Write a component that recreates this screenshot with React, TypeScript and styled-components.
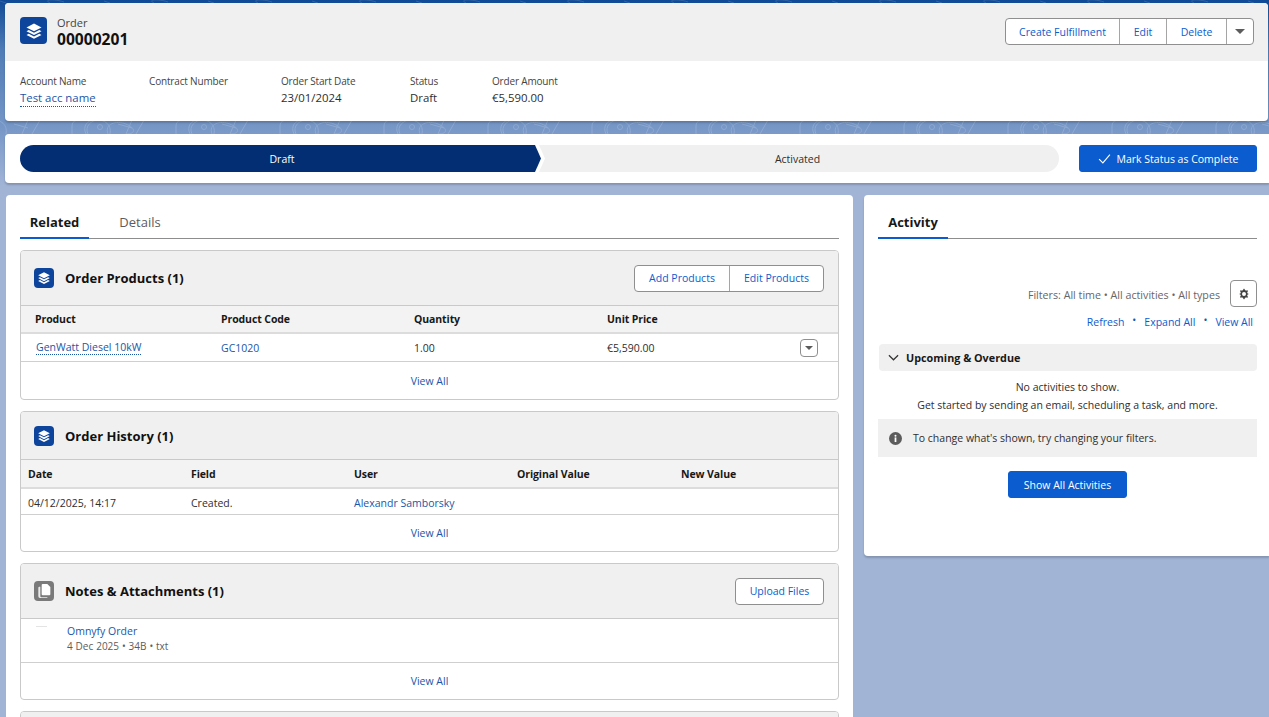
import React from "react";
import styled, { createGlobalStyle } from "styled-components";

const Global = createGlobalStyle`
  html, body { margin: 0; padding: 0; height: 717px; overflow: hidden; }
  body { font-family: "Open Sans", "Noto Sans", "Liberation Sans", sans-serif; font-size: 11.5px; color: #181818; }
  * { box-sizing: border-box; }
`;

const Page = styled.div`
  position: relative;
  width: 1269px;
  height: 717px;
  overflow: hidden;
  padding-top: 3px;
  background: linear-gradient(180deg, #0f4a96 0px, #4f7cb6 50px, #7596c6 125px, #a1b4d6 186px, #a1b4d6 100%);
`;

const Pattern = styled.svg`
  position: absolute;
  left: 0;
  top: 0;
  width: 1269px;
  height: 140px;
  opacity: 0.22;
`;

const Highlights = styled.section`
  position: relative;
  margin: 0 1px 0 5px;
  height: 118px;
  background: #fff;
  border-radius: 4px;
  overflow: hidden;
  box-shadow: 0 2px 2px rgba(0, 0, 0, 0.18);
`;

const HighlightHead = styled.header`
  height: 58px;
  background: #f0f0f0;
  display: flex;
  align-items: flex-start;
  justify-content: space-between;
  padding: 14px 14px 0 15px;
`;

const TitleWrap = styled.div`
  display: flex;
  gap: 10px;
`;

const IconTile = styled.span<{ $size: number; $tone?: string }>`
  width: ${(p) => p.$size}px;
  height: ${(p) => p.$size}px;
  background: ${(p) => p.$tone ?? "#0d459c"};
  border-radius: 4px;
  display: flex;
  align-items: center;
  justify-content: center;
  flex: none;
`;

const TitleText = styled.div`
  display: flex;
  flex-direction: column;
  margin-top: -1px;
`;

const Eyebrow = styled.span`
  font-size: 11px;
  line-height: 14px;
  color: #444;
`;

const RecordName = styled.span`
  font-size: 15.6px;
  line-height: 18px;
  font-weight: 700;
  color: #111;
`;

const BtnGroup = styled.div<{ $offset?: number }>`
  display: flex;
  height: 27px;
  margin-top: ${(p) => p.$offset ?? 0}px;
  background: #fff;
  border: 1px solid #8f8f8f;
  border-radius: 4px;
`;

const GroupBtn = styled.button<{ $w: number }>`
  width: ${(p) => p.$w}px;
  border: 0;
  border-right: 1px solid #a5a5a5;
  background: transparent;
  color: #0b5cce;
  font: inherit;
  font-size: 10.5px;
  padding: 0;
  display: flex;
  align-items: center;
  justify-content: center;
  &:last-child { border-right: 0; }
`;

const Caret = styled.span<{ $w?: number }>`
  width: 0;
  height: 0;
  border-left: ${(p) => p.$w ?? 5}px solid transparent;
  border-right: ${(p) => p.$w ?? 5}px solid transparent;
  border-top: ${(p) => p.$w ?? 5}px solid #5c5c5c;
`;

const FieldRow = styled.div`
  display: flex;
  padding: 13px 0 0 15px;
`;

const Field = styled.div<{ $w: number }>`
  width: ${(p) => p.$w}px;
  display: flex;
  flex-direction: column;
`;

const FieldLabel = styled.span`
  font-size: 10px;
  letter-spacing: -0.17px;
  line-height: 14px;
  color: #444;
`;

const FieldValue = styled.span`
  font-size: 11.4px;
  line-height: 16px;
  margin-top: 2px;
  color: #2e2e2e;
`;

const DottedLink = styled.a`
  display: inline-block;
  color: #1a56a8;
  border-bottom: 1px dotted #1a56a8;
`;

const PathCard = styled.section`
  position: relative;
  margin: 13px 0 0 5px;
  height: 49px;
  background: #fff;
  border-radius: 4px 0 0 4px;
  box-shadow: 0 2px 2px rgba(0, 0, 0, 0.18);
  display: flex;
  align-items: center;
  gap: 20px;
  padding: 0 12px 0 15px;
`;

const Track = styled.div`
  position: relative;
  width: 1039px;
  height: 27px;
  display: flex;
  background: #f0f0f0;
  border-radius: 14px;
  color: #2e2e2e;
  font-size: 10.5px;
  line-height: 28px;
  text-align: center;
`;

const StepSlot = styled.div`
  width: 525px;
  height: 27px;
  background: #fff;
  border-radius: 14px 0 0 14px;
  clip-path: polygon(0 0, 519px 0, 525px 50%, 519px 100%, 0 100%);
`;

const StepDone = styled.div`
  width: 521px;
  height: 27px;
  padding-left: 3px;
  background: #032e73;
  color: #fff;
  border-radius: 14px 0 0 14px;
  clip-path: polygon(0 0, 515px 0, 521px 50%, 515px 100%, 0 100%);
`;

const StepOpen = styled.div`
  flex: 1;
  padding-right: 9px;
`;

const PrimaryBtn = styled.button<{ $w: number }>`
  width: ${(p) => p.$w}px;
  height: 27px;
  background: #0b5cce;
  border: 1px solid #0b5cce;
  border-radius: 3px;
  color: #fff;
  font: inherit;
  font-size: 10.5px;
  display: flex;
  align-items: center;
  justify-content: center;
  gap: 6px;
  padding: 0;
`;

const Columns = styled.div`
  display: flex;
  align-items: flex-start;
  margin: 12px 0 0 6px;
  gap: 11px;
`;

const MainCol = styled.main`
  width: 847px;
  height: 530px;
  background: #fff;
  border-radius: 4px 4px 0 0;
  padding: 14px 14px 0 14px;
  overflow: hidden;
`;

const SideCol = styled.aside`
  width: 405px;
  height: 361px;
  background: #fff;
  border-radius: 4px 0 0 4px;
  box-shadow: 0 2px 2px rgba(0, 0, 0, 0.18);
  padding: 14px 12px 0 14px;
`;

const TabBar = styled.div`
  display: flex;
  height: 30px;
  border-bottom: 1px solid #8d8d8d;
`;

const Tab = styled.div<{ $active?: boolean; $w: number }>`
  width: ${(p) => p.$w}px;
  height: 30px;
  text-align: center;
  font-size: 13px;
  line-height: 27px;
  font-weight: ${(p) => (p.$active ? 700 : 400)};
  color: ${(p) => (p.$active ? "#181818" : "#5c5c5c")};
  border-bottom: ${(p) => (p.$active ? "2px solid #0b5cce" : "0")};
`;

const Card = styled.section`
  margin-top: 11px;
  background: #fff;
  border: 1px solid #c9c9c9;
  border-radius: 4px;
  overflow: hidden;
`;

const CardHead = styled.header<{ $h: number }>`
  height: ${(p) => p.$h}px;
  background: #f0f0f0;
  display: flex;
  align-items: center;
  justify-content: space-between;
  padding: 0 14px 0 13px;
  border-bottom: 1px solid #c9c9c9;
`;

const CardTitle = styled.div`
  display: flex;
  align-items: center;
  gap: 11px;
  font-size: 13px;
  font-weight: 700;
  color: #111;
`;

const Cols = styled.div<{ $cols: string; $pad: number; $h: number; $head?: boolean; $nudge?: number }>`
  display: grid;
  grid-template-columns: ${(p) => p.$cols};
  align-items: center;
  padding-left: ${(p) => p.$pad}px;
  padding-top: ${(p) => p.$nudge ?? 0}px;
  height: ${(p) => p.$h}px;
  background: ${(p) => (p.$head ? "#f3f3f3" : "#fff")};
  border-bottom: ${(p) => (p.$head ? "2px solid #dcdcdc" : "1px solid #cfcfcf")};
  font-size: 10.5px;
  font-weight: ${(p) => (p.$head ? 700 : 400)};
  letter-spacing: ${(p) => (p.$head ? "-0.1px" : "0")};
  color: ${(p) => (p.$head ? "#181818" : "#2e2e2e")};
`;

const TextLink = styled.a`
  color: #1a56a8;
`;

const RowLink = styled(DottedLink)`
  margin-left: 1px;
  justify-self: start;
`;

const RowCell = styled.div`
  display: flex;
  align-items: center;
  justify-content: space-between;
  padding-right: 20px;
`;

const RowMenu = styled.span`
  width: 18px;
  height: 18px;
  border: 1px solid #8f8f8f;
  border-radius: 4px;
  display: flex;
  align-items: center;
  justify-content: center;
`;

const CardFoot = styled.div<{ $h: number }>`
  height: ${(p) => p.$h}px;
  display: flex;
  align-items: center;
  justify-content: center;
  font-size: 10.5px;
`;

const FileRow = styled.div`
  position: relative;
  height: 44px;
  border-bottom: 1px solid #cfcfcf;
  padding: 5px 0 0 46px;
  display: flex;
  flex-direction: column;
  font-size: 10.5px;
  line-height: 15px;
`;

const FileThumb = styled.span`
  position: absolute;
  left: 15px;
  top: 7px;
  width: 11px;
  height: 1px;
  background: #e4e4e4;
`;

const FileMeta = styled.span`
  font-size: 10px;
  word-spacing: 0.3px;
  color: #5c5c5c;
`;

const Filters = styled.div`
  display: flex;
  justify-content: flex-end;
  align-items: center;
  gap: 10px;
  margin-top: 41px;
  font-size: 10.7px;
  color: #666;
`;

const FilterText = styled.span`
  margin-top: 2px;
`;

const GearBtn = styled.span`
  width: 27px;
  height: 27px;
  background: #fff;
  border: 1px solid #8f8f8f;
  border-radius: 4px;
  display: flex;
  align-items: center;
  justify-content: center;
`;

const LinkRow = styled.div`
  display: flex;
  justify-content: flex-end;
  gap: 8px;
  margin-top: 8px;
  padding-right: 4px;
  font-size: 10.5px;
  line-height: 15px;
  color: #0b5cce;
`;

const Bullet = styled.span`
  color: #1a56a8;
  margin-top: -2px;
`;

const SectionBar = styled.div`
  margin: 14px 0 0 1px;
  height: 27px;
  background: #f0f0f0;
  border-radius: 4px;
  display: flex;
  align-items: center;
  gap: 7px;
  padding-left: 9px;
  font-size: 10.8px;
  font-weight: 700;
  color: #181818;
`;

const EmptyText = styled.div`
  text-align: center;
  margin-top: 7px;
  font-size: 10.5px;
  line-height: 18px;
  color: #2e2e2e;
`;

const InfoBar = styled.div`
  margin-top: 5px;
  height: 38px;
  background: #f0f0f0;
  display: flex;
  align-items: center;
  gap: 11px;
  padding-left: 11px;
  font-size: 10.5px;
  color: #2e2e2e;
`;

const Center = styled.div`
  display: flex;
  justify-content: center;
  margin-top: 14px;
`;

const StackIcon = ({ s }: { s: number }) => (
  <svg width={s} height={s} viewBox="0 0 24 24" fill="#fff">
    <path d="M12 2 22 7.2 12 12.4 2 7.2Z" />
    <path d="M5 10.6 12 14.2 19 10.6 22 12.2 12 17.4 2 12.2Z" />
    <path d="M5 15.6 12 19.2 19 15.6 22 17.2 12 22.4 2 17.2Z" />
  </svg>
);

const DocsIcon = () => (
  <svg width="16" height="16" viewBox="0 0 24 24">
    <path fill="#fff" d="M10 1.500h7l4.500 4.500V17a1.500 1.500 0 0 1-1.500 1.500H10A1.500 1.500 0 0 1 8.500 17V3A1.500 1.500 0 0 1 10 1.500Z" />
    <path fill="#fff" opacity="0.85" d="M6.500 5.500V20A1.500 1.500 0 0 0 8 21.500h9v1H6A2.500 2.500 0 0 1 3.500 20V7A1.500 1.500 0 0 1 5 5.500Z" />
  </svg>
);

const GearIcon = () => (
  <svg width="12" height="12" viewBox="0 0 24 24">
    <path
      fill="#444"
      fillRule="evenodd"
      d="M12 1l3 4.200 5.200-.2-2 4.800L21.500 12l-3.300 2.200 2 4.800-5.200-.2L12 23l-3-4.200-5.200.2 2-4.800L2.500 12l3.300-2.200-2-4.800 5.200.2ZM12 8a4 4 0 1 0 0 8 4 4 0 0 0 0-8Z"
    />
  </svg>
);

const InfoIcon = () => (
  <svg width="13" height="13" viewBox="0 0 24 24">
    <circle cx="12" cy="12" r="12" fill="#5c5c5c" />
    <rect x="10.400" y="10" width="3.200" height="8.500" fill="#fff" />
    <circle cx="12" cy="6.800" r="1.900" fill="#fff" />
  </svg>
);

const Check = () => (
  <svg width="13" height="13" viewBox="0 0 24 24" fill="none" stroke="#fff" strokeWidth="2">
    <path d="M2 13l7 7L22 5" />
  </svg>
);

const Chevron = () => (
  <svg width="11" height="11" viewBox="0 0 24 24" fill="none" stroke="#333" strokeWidth="2.600">
    <path d="M2 7l10 10L22 7" />
  </svg>
);

const swirls = Array.from({ length: 13 }, (_, i) => i * 104 - 20);

const t1 = "186px 193px 193px 1fr";
const t2 = "163px 163px 163px 164px 1fr";

export default function App() {
  return (
    <Page>
      <Global />
      <Pattern viewBox="0 0 1269 140" aria-hidden="true">
        {swirls.map((x) => (
          <g key={x} fill="none" stroke="#dfe8f5" strokeWidth="1">
            <path d={`M${x + 48} 120l-6 14M${x + 60} 120l-8 14M${x + 34} 124l14 4`} />
            <path d={`M${x + 92} 134v-8c0-6 6-6 10-6M${x + 106} 134c-4-8 2-14 8-14`} />
            <path d={`M${x + 128} 134c-4-10 8-14 18-10s10 10 0 10`} />
            <circle cx={x + 16} cy={127} r="2.500" />
            <path d={`M${x + 4} 134c-4-8 4-14 10-14s14 4 12 14`} />
            <path d={`M${x + 70} 3c-8-4 6-4 14-1M${x + 20} 1l6 2`} strokeOpacity="0.7" />
          </g>
        ))}
      </Pattern>

      <Highlights>
        <HighlightHead>
          <TitleWrap>
            <IconTile $size={27}>
              <StackIcon s={18} />
            </IconTile>
            <TitleText>
              <Eyebrow>Order</Eyebrow>
              <RecordName>00000201</RecordName>
            </TitleText>
          </TitleWrap>
          <BtnGroup $offset={1}>
            <GroupBtn $w={114}>Create Fulfillment</GroupBtn>
            <GroupBtn $w={47}>Edit</GroupBtn>
            <GroupBtn $w={60}>Delete</GroupBtn>
            <GroupBtn $w={26}>
              <Caret />
            </GroupBtn>
          </BtnGroup>
        </HighlightHead>
        <FieldRow>
          <Field $w={129}>
            <FieldLabel>Account Name</FieldLabel>
            <FieldValue>
              <DottedLink>Test acc name</DottedLink>
            </FieldValue>
          </Field>
          <Field $w={132}>
            <FieldLabel>Contract Number</FieldLabel>
          </Field>
          <Field $w={129}>
            <FieldLabel>Order Start Date</FieldLabel>
            <FieldValue>23/01/2024</FieldValue>
          </Field>
          <Field $w={82}>
            <FieldLabel>Status</FieldLabel>
            <FieldValue>Draft</FieldValue>
          </Field>
          <Field $w={120}>
            <FieldLabel>Order Amount</FieldLabel>
            <FieldValue>€5,590.00</FieldValue>
          </Field>
        </FieldRow>
      </Highlights>

      <PathCard>
        <Track>
          <StepSlot>
            <StepDone>Draft</StepDone>
          </StepSlot>
          <StepOpen>Activated</StepOpen>
        </Track>
        <PrimaryBtn $w={178}>
          <Check />
          Mark Status as Complete
        </PrimaryBtn>
      </PathCard>

      <Columns>
        <MainCol>
          <TabBar>
            <Tab $active $w={69}>Related</Tab>
            <Tab $w={102}>Details</Tab>
          </TabBar>

          <Card>
            <CardHead $h={55}>
              <CardTitle>
                <IconTile $size={20}>
                  <StackIcon s={14} />
                </IconTile>
                Order Products (1)
              </CardTitle>
              <BtnGroup>
                <GroupBtn $w={95}>Add Products</GroupBtn>
                <GroupBtn $w={93}>Edit Products</GroupBtn>
              </BtnGroup>
            </CardHead>
            <Cols $cols={t1} $pad={14} $h={28} $head>
              <div>Product</div>
              <div>Product Code</div>
              <div>Quantity</div>
              <div>Unit Price</div>
            </Cols>
            <Cols $cols={t1} $pad={14} $h={28}>
              <RowLink>GenWatt Diesel 10kW</RowLink>
              <div><TextLink>GC1020</TextLink></div>
              <div>1.00</div>
              <RowCell>
                €5,590.00
                <RowMenu><Caret $w={4} /></RowMenu>
              </RowCell>
            </Cols>
            <CardFoot $h={37}>
              <TextLink>View All</TextLink>
            </CardFoot>
          </Card>

          <Card>
            <CardHead $h={48}>
              <CardTitle>
                <IconTile $size={20}>
                  <StackIcon s={14} />
                </IconTile>
                Order History (1)
              </CardTitle>
            </CardHead>
            <Cols $cols={t2} $pad={7} $h={29} $head>
              <div>Date</div>
              <div>Field</div>
              <div>User</div>
              <div>Original Value</div>
              <div>New Value</div>
            </Cols>
            <Cols $cols={t2} $pad={7} $h={26} $nudge={2}>
              <div>04/12/2025, 14:17</div>
              <div>Created.</div>
              <div><TextLink>Alexandr Samborsky</TextLink></div>
              <div />
              <div />
            </Cols>
            <CardFoot $h={36}>
              <TextLink>View All</TextLink>
            </CardFoot>
          </Card>

          <Card>
            <CardHead $h={55}>
              <CardTitle>
                <IconTile $size={20} $tone="#7a7a7a">
                  <DocsIcon />
                </IconTile>
                Notes &amp; Attachments (1)
              </CardTitle>
              <BtnGroup>
                <GroupBtn $w={87}>Upload Files</GroupBtn>
              </BtnGroup>
            </CardHead>
            <FileRow>
              <FileThumb />
              <TextLink>Omnyfy Order</TextLink>
              <FileMeta>4 Dec 2025 • 34B • txt</FileMeta>
            </FileRow>
            <CardFoot $h={36}>
              <TextLink>View All</TextLink>
            </CardFoot>
          </Card>

          <Card>
            <CardHead $h={55} />
          </Card>
        </MainCol>

        <SideCol>
          <TabBar>
            <Tab $active $w={70}>Activity</Tab>
          </TabBar>
          <Filters>
            <FilterText>Filters: All time • All activities • All types</FilterText>
            <GearBtn><GearIcon /></GearBtn>
          </Filters>
          <LinkRow>
            <span>Refresh</span>
            <Bullet>•</Bullet>
            <span>Expand All</span>
            <Bullet>•</Bullet>
            <span>View All</span>
          </LinkRow>
          <SectionBar>
            <Chevron />
            Upcoming &amp; Overdue
          </SectionBar>
          <EmptyText>
            No activities to show.
            <br />
            Get started by sending an email, scheduling a task, and more.
          </EmptyText>
          <InfoBar>
            <InfoIcon />
            To change what's shown, try changing your filters.
          </InfoBar>
          <Center>
            <PrimaryBtn $w={119}>Show All Activities</PrimaryBtn>
          </Center>
        </SideCol>
      </Columns>
    </Page>
  );
}
